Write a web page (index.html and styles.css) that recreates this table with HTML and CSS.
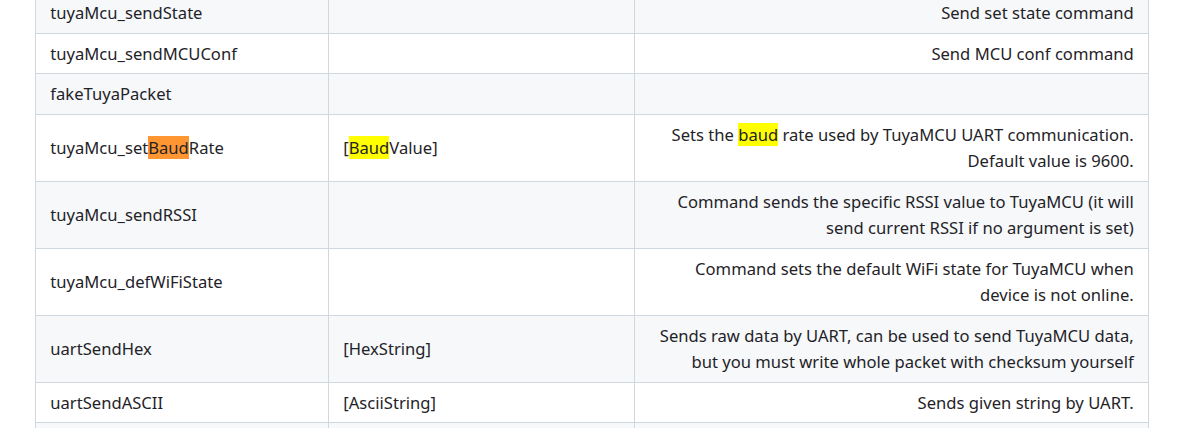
FILE: index.html
```html
<!DOCTYPE html>
<html lang="en">
<head>
<meta charset="utf-8">
<title>Commands</title>
<link rel="stylesheet" href="styles.css">
</head>
<body>
<div class="page">
  <table class="cmd-table">
    <colgroup>
      <col class="c-name">
      <col class="c-args">
      <col class="c-desc">
    </colgroup>
    <tbody>
      <tr class="alt">
        <td>tuyaMcu_sendState</td>
        <td></td>
        <td class="desc">Send set state command</td>
      </tr>
      <tr>
        <td>tuyaMcu_sendMCUConf</td>
        <td></td>
        <td class="desc">Send MCU conf command</td>
      </tr>
      <tr class="alt">
        <td>fakeTuyaPacket</td>
        <td></td>
        <td class="desc"></td>
      </tr>
      <tr>
        <td>tuyaMcu_set<span class="hl-current">Baud</span>Rate</td>
        <td>[<span class="hl">Baud</span>Value]</td>
        <td class="desc">Sets the <span class="hl">baud</span> rate used by TuyaMCU UART communication. Default value is 9600.</td>
      </tr>
      <tr class="alt">
        <td>tuyaMcu_sendRSSI</td>
        <td></td>
        <td class="desc">Command sends the specific RSSI value to TuyaMCU (it will send current RSSI if no argument is set)</td>
      </tr>
      <tr>
        <td>tuyaMcu_defWiFiState</td>
        <td></td>
        <td class="desc">Command sets the default WiFi state for TuyaMCU when device is not online.</td>
      </tr>
      <tr class="alt">
        <td>uartSendHex</td>
        <td>[HexString]</td>
        <td class="desc">Sends raw data by UART, can be used to send TuyaMCU data, but you must write whole packet with checksum yourself</td>
      </tr>
      <tr>
        <td>uartSendASCII</td>
        <td>[AsciiString]</td>
        <td class="desc">Sends given string by UART.</td>
      </tr>
      <tr class="alt empty">
        <td></td>
        <td></td>
        <td class="desc"></td>
      </tr>
    </tbody>
  </table>
</div>
</body>
</html>
```

FILE: styles.css
```css
html, body {
  margin: 0;
  padding: 0;
  background: #ffffff;
}

body {
  font-family: "Noto Sans", "Open Sans", "Liberation Sans", sans-serif;
  font-size: 16.6px;
  line-height: 26.4px;
  color: #1f2328;
  overflow: hidden;
}

.page {
  padding-left: 35px;
  margin-top: -8px;
}

.cmd-table {
  border-collapse: collapse;
  table-layout: fixed;
  width: 1113px;
}

.c-name { width: 293px; }
.c-args { width: 306px; }
.c-desc { width: 514px; }

.cmd-table td {
  border: 1px solid #d0d7de;
  padding: 7.1px 14.3px 6.1px;
  vertical-align: middle;
  text-align: left;
  background: #ffffff;
}

.cmd-table tr.alt td {
  background: #f6f8fa;
}

.cmd-table tr.empty td {
  height: 26.4px;
}

.cmd-table td.desc {
  text-align: right;
}

.hl {
  background: #ffff00;
}

.hl-current {
  background: #ff9632;
}
```
